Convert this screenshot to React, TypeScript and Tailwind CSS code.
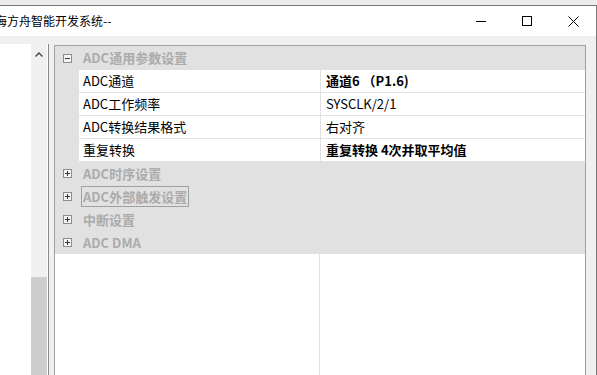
const font = { fontFamily: '"Noto Sans CJK SC", "Noto Sans", sans-serif' };

const Box = ({ open }: { open: boolean }) => (
  <svg width="9" height="9" viewBox="0 0 9 9" className="shrink-0">
    <rect x="0.5" y="0.5" width="8" height="8" fill="#f4f4f4" stroke="#8d8d8d" />
    <line x1="2" y1="4.5" x2="7" y2="4.5" stroke="#333" />
    {!open && <line x1="4.5" y1="2" x2="4.5" y2="7" stroke="#333" />}
  </svg>
);

const App = () => {
  const props = [
    { label: "ADC通道", value: "通道6 （P1.6)", bold: true },
    { label: "ADC工作频率", value: "SYSCLK/2/1", bold: false },
    { label: "ADC转换结果格式", value: "右对齐", bold: false },
    { label: "重复转换", value: "重复转换 4次并取平均值", bold: true },
  ];
  const cats = ["ADC时序设置", "ADC外部触发设置", "中断设置", "ADC DMA"];

  return (
    <div className="w-[597px] h-[375px] overflow-hidden bg-[#ececec] flex flex-col" style={font}>
      <div className="h-[5px] shrink-0" />
      <div className="flex-1 flex flex-col border-t border-r border-[#7a7a7a] min-h-0">
        {/* title bar */}
        <div className="h-[30px] bg-white flex items-center shrink-0">
          <span className="ml-[-5px] text-[12px] text-black whitespace-nowrap">海方舟智能开发系统--</span>
          <div className="ml-auto flex items-center h-full">
            <div className="w-[46px] h-full flex items-center justify-center">
              <div className="w-[10px] h-px bg-black" />
            </div>
            <div className="w-[46px] h-full flex items-center justify-center">
              <div className="w-[10px] h-[10px] border border-black" />
            </div>
            <div className="w-[46px] h-full flex items-center justify-center">
              <svg width="11" height="11" viewBox="0 0 11 11">
                <path d="M0.5 0.5 L10.5 10.5 M10.5 0.5 L0.5 10.5" stroke="#000" strokeWidth="1" />
              </svg>
            </div>
          </div>
        </div>

        {/* body */}
        <div className="flex-1 flex bg-[#f0f0f0] pt-[8px] min-h-0">
          {/* left tree panel */}
          <div className="w-[49px] flex bg-white border-r border-[#8a8a8a] shrink-0">
            <div className="w-[31px]" />
            <div className="w-[16px] bg-[#f0f0f0] flex flex-col">
              <div className="h-[17px] flex items-center justify-center mt-[2px]">
                <svg width="8" height="5" viewBox="0 0 8 5">
                  <path d="M0.5 4.5 L4 1 L7.5 4.5" stroke="#505050" strokeWidth="1.5" fill="none" />
                </svg>
              </div>
              <div className="flex-1" />
              <div className="h-[98px] bg-[#cdcdcd]" />
            </div>
          </div>

          <div className="w-[5px] shrink-0" />

          {/* property grid */}
          <div className="w-[532px] mt-[1px] bg-white border-l border-t border-r border-[#a0a0a0] flex flex-col shrink-0">
            <div className="bg-[#e1e1e1]">
              <div className="h-[24px] flex items-center pl-[8px]">
                <Box open />
                <span className="ml-[11px] text-[13px] font-bold text-[#ababab]">ADC通用参数设置</span>
              </div>
              {props.map((p, i) => (
                <div key={i} className="h-[23px] flex">
                  <div className="w-[24px] shrink-0" />
                  <div className="w-[241px] bg-white border-b border-[#e1e1e1] flex items-center pl-[4px] text-[13px] text-black">
                    {p.label}
                  </div>
                  <div className="w-px bg-[#e1e1e1]" />
                  <div className={`flex-1 bg-white border-b border-[#e1e1e1] flex items-center pl-[5px] text-[13px] text-black ${p.bold ? "font-bold" : ""}`}>
                    {p.value}
                  </div>
                </div>
              ))}
              {cats.map((c, i) => (
                <div key={i} className="h-[23px] flex items-center pl-[8px]">
                  <Box open={false} />
                  <span
                    className={`ml-[9px] px-[1px] text-[13px] font-bold text-[#ababab] leading-[19px] border ${
                      i === 1 ? "border-[#a0a0a0]" : "border-transparent"
                    }`}
                  >
                    {c}
                  </span>
                </div>
              ))}
            </div>
            <div className="flex-1 flex">
              <div className="w-[265px] border-r border-[#e1e1e1]" />
              <div className="flex-1" />
            </div>
          </div>
        </div>
      </div>
    </div>
  );
};

export default App;
